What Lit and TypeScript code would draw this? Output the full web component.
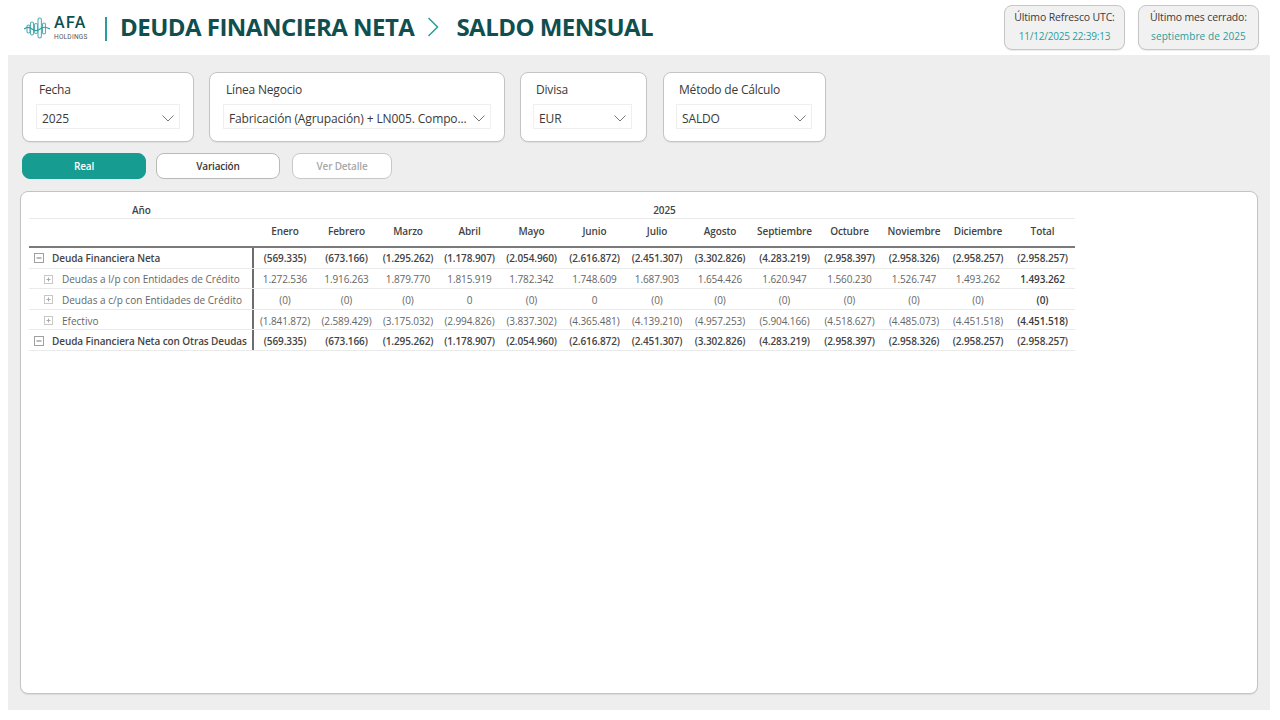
import { LitElement, css, html, svg } from 'lit';
import { customElement } from 'lit/decorators.js';

type Row = { label: string; kind: 'total' | 'child'; values: string[] };

const MONTHS = ['Enero', 'Febrero', 'Marzo', 'Abril', 'Mayo', 'Junio', 'Julio', 'Agosto', 'Septiembre', 'Octubre', 'Noviembre', 'Diciembre', 'Total'];

const NETA = ['(569.335)', '(673.166)', '(1.295.262)', '(1.178.907)', '(2.054.960)', '(2.616.872)', '(2.451.307)', '(3.302.826)', '(4.283.219)', '(2.958.397)', '(2.958.326)', '(2.958.257)', '(2.958.257)'];

const ROWS: Row[] = [
  { label: 'Deuda Financiera Neta', kind: 'total', values: NETA },
  { label: 'Deudas a l/p con Entidades de Crédito', kind: 'child', values: ['1.272.536', '1.916.263', '1.879.770', '1.815.919', '1.782.342', '1.748.609', '1.687.903', '1.654.426', '1.620.947', '1.560.230', '1.526.747', '1.493.262', '1.493.262'] },
  { label: 'Deudas a c/p con Entidades de Crédito', kind: 'child', values: ['(0)', '(0)', '(0)', '0', '(0)', '0', '(0)', '(0)', '(0)', '(0)', '(0)', '(0)', '(0)'] },
  { label: 'Efectivo', kind: 'child', values: ['(1.841.872)', '(2.589.429)', '(3.175.032)', '(2.994.826)', '(3.837.302)', '(4.365.481)', '(4.139.210)', '(4.957.253)', '(5.904.166)', '(4.518.627)', '(4.485.073)', '(4.451.518)', '(4.451.518)'] },
  { label: 'Deuda Financiera Neta con Otras Deudas', kind: 'total', values: NETA },
];

const FILTERS = [
  { cls: 'f-fecha', label: 'Fecha', value: '2025' },
  { cls: 'f-linea', label: 'Línea Negocio', value: 'Fabricación (Agrupación) + LN005. Compo...' },
  { cls: 'f-divisa', label: 'Divisa', value: 'EUR' },
  { cls: 'f-metodo', label: 'Método de Cálculo', value: 'SALDO' },
];

const chevron = html`<svg class="chev" width="12" height="7" viewBox="0 0 12 7"><path d="M.5.5L6 6 11.5.5" fill="none" stroke="#777" stroke-width="1"/></svg>`;

const expander = (open: boolean) => html`<svg class="exp" width=${open ? 10 : 9} height=${open ? 10 : 9} viewBox=${open ? '0 0 10 10' : '0 0 9 9'}>
  ${open
    ? svg`<rect x=".5" y=".5" width="9" height="9" fill="none" stroke="#a0a0a0"/><path d="M2.5 5h5" stroke="#777" fill="none"/>`
    : svg`<rect x=".5" y=".5" width="8" height="8" fill="none" stroke="#c8c8c8"/><path d="M2.5 4.5h4M4.5 2.5v4" stroke="#aaa" fill="none"/>`}
</svg>`;

const logo = html`<svg class="wave" width="26" height="22" viewBox="0 0 26 22">
  <g fill="none" stroke="#58aeb2" stroke-width="1.1">
    <rect x="3" y="8" width="3" height="8" rx="1.5"/>
    <rect x="6.5" y="5" width="3" height="13" rx="1.5"/>
    <rect x="10.5" y="6.5" width="3" height="10" rx="1.5"/>
    <rect x="14" y="1" width="3.4" height="20" rx="1.7"/>
    <rect x="18.5" y="6" width="3" height="11" rx="1.5"/>
    <path d="M0 12c3-2.5 5-2.5 8 0s5 2.5 8 0 6-2.5 10 0" stroke="#2f9ea1"/>
  </g>
</svg>`;

@customElement('app-root')
export class AppRoot extends LitElement {
  static styles = css`
    :host {
      display: block;
      position: relative;
      width: 1280px;
      height: 720px;
      overflow: hidden;
      background: #fff;
      font-family: 'Open Sans', 'Noto Sans', sans-serif;
      color: #3a3a3a;
    }

    .top {
      display: flex;
      align-items: center;
      height: 55px;
      padding-left: 24px;
      box-sizing: border-box;
    }
    .logo {
      display: flex;
      align-items: center;
      gap: 4px;
      width: 81px;
    }
    .logo-text {
      display: flex;
      flex-direction: column;
      align-items: flex-start;
      margin-top: 1px;
      font-family: Roboto, sans-serif;
    }
    .afa {
      font-size: 16px;
      line-height: 16px;
      font-weight: 500;
      letter-spacing: 1.4px;
      color: #0f4f4f;
    }
    .holdings {
      font-size: 6.5px;
      line-height: 8px;
      margin-top: 2px;
      letter-spacing: 0.25px;
      color: #555;
    }
    .divider {
      width: 2px;
      height: 24px;
      margin-top: 2px;
      background: #2a9d9b;
      margin-right: 13px;
    }
    .title {
      font-size: 24px;
      line-height: 30px;
      margin-top: -1px;
      font-weight: 700;
      letter-spacing: -0.52px;
      color: #0f4f4f;
      white-space: nowrap;
    }
    .sep {
      margin: -2px 17px 0 13px;
      display: block;
    }
    .info-group {
      display: flex;
      gap: 13px;
      margin-left: auto;
      margin-right: 21px;
      margin-top: -1px;
    }
    .info {
      box-sizing: border-box;
      width: 121px;
      height: 45px;
      border: 1px solid #c6c6c6;
      border-radius: 8px;
      background: #f1f1f1;
      text-align: center;
      font-size: 10.5px;
      letter-spacing: -0.15px;
      line-height: 14px;
      padding-top: 4px;
      box-shadow: 0 1px 1px rgba(0, 0, 0, 0.08);
    }
    .info b {
      display: block;
      margin-top: 5px;
      font-size: 10px;
      font-weight: 400;
      letter-spacing: -0.2px;
      color: #2a9d9b;
    }
    .info.month b { letter-spacing: 0.1px; }

    .panel {
      box-sizing: border-box;
      height: 655px;
      margin-left: 8px;
      margin-right: 10px;
      padding: 17px 12px 16px 12px;
      background: #eeeeee;
      display: flex;
      flex-direction: column;
    }
    .filters {
      display: flex;
      padding-left: 2px;
    }
    .filter {
      box-sizing: border-box;
      height: 70px;
      padding: 8px 13px 0;
      background: #fff;
      border: 1px solid #c4c4c4;
      border-radius: 8px;
      font-size: 12px;
      font-weight: 500;
      letter-spacing: -0.2px;
      box-shadow: 0 1px 1px rgba(0, 0, 0, 0.06);
    }
    .f-fecha { width: 172px; margin-right: 15px; }
    .f-linea { width: 296px; margin-right: 15px; }
    .f-divisa { width: 127px; margin-right: 16px; padding: 8px 14px 0 12px; }
    .f-metodo { width: 163px; padding-left: 12px; }
    .f-label {
      height: 23px;
      line-height: 18px;
      padding-left: 3px;
    }
    .select {
      box-sizing: border-box;
      height: 25px;
      display: flex;
      align-items: center;
      justify-content: space-between;
      padding: 3px 5px 0 5px;
      border: 1px solid #efefef;
      white-space: nowrap;
      letter-spacing: -0.13px;
    }
    .chev { flex: none; }

    .actions {
      display: flex;
      padding: 11px 0 0 2px;
      height: 26px;
    }
    .btn {
      box-sizing: border-box;
      height: 26px;
      border: 1px solid #b9b9b9;
      border-radius: 8px;
      background: #fff;
      font-size: 10px;
      font-weight: 600;
      letter-spacing: -0.2px;
      display: flex;
      align-items: center;
      justify-content: center;
    }
    .btn.real { width: 124px; margin-right: 10px; background: #169c90; border-color: #169c90; color: #fff; }
    .btn.var { width: 124px; margin-right: 12px; }
    .btn.det { width: 100px; color: #a8a8a8; border-color: #c8c8c8; }

    .card {
      flex: 1;
      box-sizing: border-box;
      margin-top: 12px;
      padding: 9px 0 0 8px;
      background: #fff;
      border: 1px solid #c4c4c4;
      border-radius: 8px;
      box-shadow: 0 1px 1px rgba(0, 0, 0, 0.08);
    }
    .matrix {
      width: 1046px;
      font-size: 10px;
      letter-spacing: -0.1px;
      color: #444;
    }
    .row {
      display: grid;
      grid-template-columns: 225px 62px 61px 62px 61px 63px 63px 62px 64px 65px 65px 64px 64px 65px;
      align-items: center;
      height: 20.6px;
      border-bottom: 1px solid #eaeaea;
      box-sizing: border-box;
    }
    .row > span {
      box-sizing: border-box;
      text-align: center;
      white-space: nowrap;
    }
    .child > span,
    .child ~ .total > span {
      padding-top: 2px;
    }
    .year {
      display: grid;
      grid-template-columns: 225px 1fr;
      align-items: center;
      height: 18px;
      border-bottom: 1px solid #eaeaea;
      box-sizing: border-box;
      font-weight: 600;
    }
    .year span { text-align: center; }
    .months {
      height: 29px;
      border-bottom: 2px solid #7a7a7a;
      font-weight: 600;
      padding-bottom: 4px;
    }
    .row .name {
      display: flex;
      align-items: center;
      height: 100%;
      text-align: left;
      border-right: 2px solid #6d6d6d;
    }
    .total { font-weight: 600; color: #444; }
    .child { color: #666; }
    .child .name { letter-spacing: 0; }
    .child .last { font-weight: 600; color: #3a3a3a; }
    .exp { flex: none; margin-left: 5px; margin-right: 8px; }
    .child .exp { margin-left: 15px; margin-right: 9px; }
  `;

  render() {
    return html`
      <header class="top">
        <div class="logo">
          ${logo}
          <div class="logo-text"><span class="afa">AFA</span><span class="holdings">HOLDINGS</span></div>
        </div>
        <div class="divider"></div>
        <span class="title">DEUDA FINANCIERA NETA</span>
        <svg class="sep" width="12" height="20" viewBox="0 0 12 20"><path d="M1.5 1l9 9-9 9" fill="none" stroke="#2a9d9b" stroke-width="1.5"/></svg>
        <span class="title">SALDO MENSUAL</span>
        <div class="info-group">
          <div class="info">Último Refresco UTC:<b>11/12/2025 22:39:13</b></div>
          <div class="info month">Último mes cerrado:<b>septiembre de 2025</b></div>
        </div>
      </header>
      <main class="panel">
        <section class="filters">
          ${FILTERS.map((f) => html`
            <div class="filter ${f.cls}">
              <div class="f-label">${f.label}</div>
              <div class="select"><span>${f.value}</span>${chevron}</div>
            </div>`)}
        </section>
        <nav class="actions">
          <div class="btn real">Real</div>
          <div class="btn var">Variación</div>
          <div class="btn det">Ver Detalle</div>
        </nav>
        <section class="card">
          <div class="matrix">
            <div class="year"><span>Año</span><span>2025</span></div>
            <div class="row months">
              <span></span>
              ${MONTHS.map((m) => html`<span>${m}</span>`)}
            </div>
            ${ROWS.map((r) => html`
              <div class="row ${r.kind}">
                <span class="name">${expander(r.kind === 'total')}${r.label}</span>
                ${r.values.map((v, i) => html`<span class=${i === 12 ? 'last' : ''}>${v}</span>`)}
              </div>`)}
          </div>
        </section>
      </main>
    `;
  }
}
